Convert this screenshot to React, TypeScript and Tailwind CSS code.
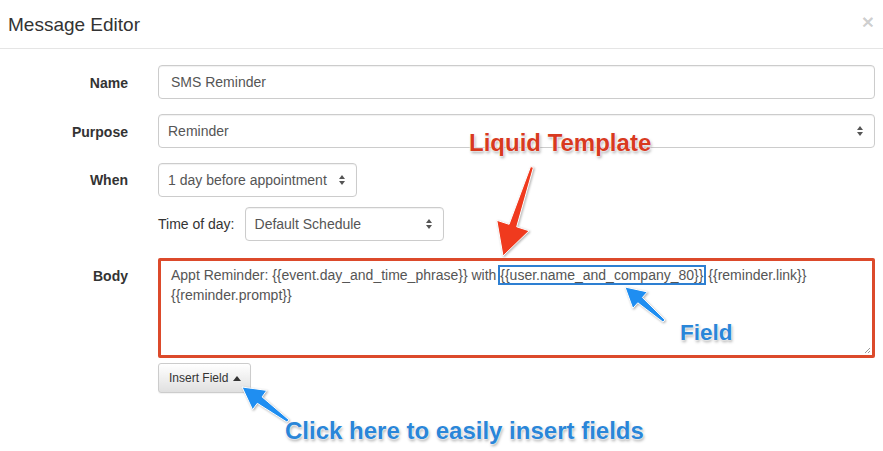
import React from "react";

const font = "font-['Liberation_Sans',Arial,sans-serif]";
const calloutShadow = "[text-shadow:0_0_1px_#fff,0_0_2px_#fff,0_0_2px_#fff,1px_2px_3px_rgba(0,0,0,0.35)]";

type Pt = [number, number];

// builds a tapered skitch-style arrow polygon from tail to tip
function arrowPoints(tail: Pt, tip: Pt, headLen: number, headHalf: number, tailHalf: number, neckHalf: number) {
  const dx = tip[0] - tail[0];
  const dy = tip[1] - tail[1];
  const len = Math.hypot(dx, dy);
  const ux = dx / len;
  const uy = dy / len;
  const nx = -uy;
  const ny = ux;
  const bx = tip[0] - ux * headLen;
  const by = tip[1] - uy * headLen;
  const pts: Pt[] = [
    [tail[0] + nx * tailHalf, tail[1] + ny * tailHalf],
    [bx + nx * neckHalf, by + ny * neckHalf],
    [bx + nx * headHalf, by + ny * headHalf],
    tip,
    [bx - nx * headHalf, by - ny * headHalf],
    [bx - nx * neckHalf, by - ny * neckHalf],
    [tail[0] - nx * tailHalf, tail[1] - ny * tailHalf],
  ];
  return pts.map((p) => `${p[0].toFixed(1)},${p[1].toFixed(1)}`).join(" ");
}

function SelectCaret() {
  return (
    <svg width="8" height="12" viewBox="0 0 8 12" className="shrink-0">
      <path d="M4 1 L7 5 L1 5 Z" fill="#555" />
      <path d="M4 11 L7 7 L1 7 Z" fill="#555" />
    </svg>
  );
}

function FakeSelect({ value, className }: { value: string; className: string }) {
  return (
    <div
      className={`flex items-center justify-between h-[34px] pl-[9px] pr-[10px] rounded-[4px] border border-[#ccc] bg-white text-[14px] text-[#555] shadow-[inset_0_1px_1px_rgba(0,0,0,0.06)] ${className}`}
    >
      <span>{value}</span>
      <SelectCaret />
    </div>
  );
}

function Label({ children, className = "" }: { children: React.ReactNode; className?: string }) {
  return <div className={`text-right font-bold text-[14px] text-[#333] ${className}`}>{children}</div>;
}

export default function App() {
  return (
    <div className={`relative w-[883px] h-[451px] bg-white overflow-hidden ${font}`}>
      {/* Header */}
      <div className="flex items-center justify-between h-[49px] pl-[8px] pr-[8px] border-b border-[#e5e5e5]">
        <h4 className="text-[19px] text-[#333] leading-none pt-[1px]">Message Editor</h4>
        <span className="text-[21px] font-bold leading-none text-black/20 -mt-[6px] mr-[1px]">×</span>
      </div>

      {/* Form */}
      <div className="grid grid-cols-[128px_1fr] gap-x-[30px] pr-[8px] pt-[16px]">
        <Label className="pt-[8px]">Name</Label>
        <div className="flex items-center h-[34px] px-[12px] rounded-[4px] border border-[#ccc] text-[14px] text-[#555] shadow-[inset_0_1px_1px_rgba(0,0,0,0.06)]">
          SMS Reminder
        </div>

        <Label className="pt-[23px]">Purpose</Label>
        <div className="pt-[15px]">
          <FakeSelect value="Reminder" className="w-full" />
        </div>

        <Label className="pt-[22px]">When</Label>
        <div className="pt-[15px] flex flex-col gap-[10px]">
          <FakeSelect value="1 day before appointment" className="w-[199px]" />
          <div className="flex items-center gap-[10px]">
            <span className="text-[14px] text-[#333]">Time of day:</span>
            <FakeSelect value="Default Schedule" className="w-[199px]" />
          </div>
        </div>

        <Label className="pt-[25px]">Body</Label>
        <div className="pt-[17px]">
          <div className="relative h-[100px] rounded-[2px] border-[3px] border-[#dc4a2b] pl-[10px] pr-[12px] pt-[4px] text-[14px] leading-[20px] text-[#555]">
            Appt Reminder: {"{{event.day_and_time_phrase}}"} with{" "}
            <span className="outline-2 outline-solid outline-[#2d7fd2] outline-offset-[0px] pr-[1px]">
              {"{{user.name_and_company_80}}"}
            </span>{" "}
            {"{{reminder.link}}"}
            <br />
            {"{{reminder.prompt}}"}
            <svg width="7" height="7" viewBox="0 0 7 7" className="absolute right-[1px] bottom-[1px]">
              <path d="M6 1 L1 6 M6 4 L4 6" stroke="#999" strokeWidth="1" />
            </svg>
          </div>
          <button className="mt-[5px] flex items-center gap-[5px] h-[30px] pl-[10px] pr-[9px] rounded-[3px] border border-[#ccc] bg-gradient-to-b from-white to-[#e0e0e0] text-[12px] text-[#333] shadow-[0_1px_1px_rgba(0,0,0,0.05)]">
            Insert Field
            <svg width="8" height="5" viewBox="0 0 8 5">
              <path d="M4 0 L8 5 L0 5 Z" fill="#333" />
            </svg>
          </button>
        </div>
      </div>

      {/* Callouts */}
      <svg
        className="absolute top-0 left-0 pointer-events-none [filter:drop-shadow(1px_1px_1px_rgba(0,0,0,0.3))]"
        width="883"
        height="451"
      >
        <polygon points={arrowPoints([532, 167], [503, 256], 32, 17, 1.5, 4)} fill="#f03a1e" stroke="#fff" strokeWidth="1" strokeLinejoin="round" />
        <polygon points={arrowPoints([664, 321], [625, 287], 20, 11, 1.5, 3.5)} fill="#1f8ef1" stroke="#fff" strokeWidth="1" strokeLinejoin="round" />
        <polygon points={arrowPoints([288, 421], [242, 387], 22, 12, 1.5, 4)} fill="#1f8ef1" stroke="#fff" strokeWidth="1" strokeLinejoin="round" />
      </svg>
      <div className={`absolute left-[469px] top-[125px] text-[24px] font-bold text-[#d83a1f] ${calloutShadow}`}>
        Liquid Template
      </div>
      <div className={`absolute left-[680px] top-[316px] text-[22.5px] font-bold text-[#2a86d8] ${calloutShadow}`}>
        Field
      </div>
      <div className={`absolute left-[285px] top-[413px] text-[24px] font-bold text-[#2a86d8] ${calloutShadow}`}>
        Click here to easily insert fields
      </div>
    </div>
  );
}
